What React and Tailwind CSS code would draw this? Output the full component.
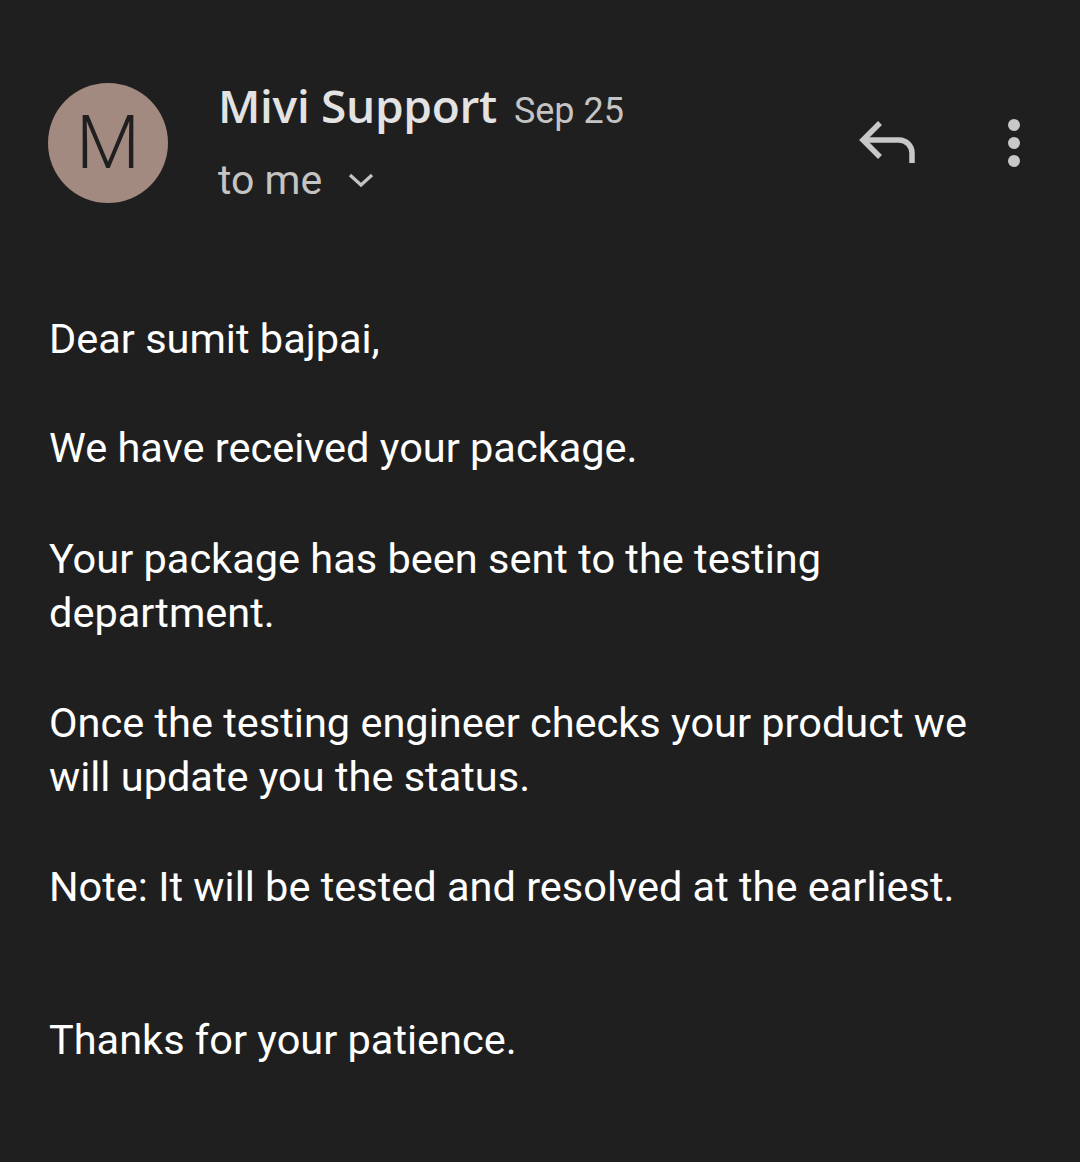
export default function App() {
  return (
    <div className="w-[1080px] h-[1162px] bg-[#1f1f1f] overflow-hidden relative" style={{ fontFamily: "Roboto, 'Liberation Sans', sans-serif" }}>
      <div className="flex items-start pt-[83px] pl-[48px]">
        <div className="w-[120px] h-[120px] rounded-full bg-[#a38a80] flex items-center justify-center shrink-0">
          <span className="text-[#1f1f1f] text-[74px] leading-none font-light" style={{ fontFamily: "Roboto, sans-serif" }}>M</span>
        </div>
        <div className="ml-[50px] flex flex-col">
          <div className="flex items-baseline mt-[-2px]">
            <span className="text-[#e3e3e3] text-[46px] font-semibold leading-[48px]" style={{ fontFamily: "'Open Sans', Roboto, sans-serif", letterSpacing: "-0.3px" }}>Mivi Support</span>
            <span className="text-[#c4c4c4] text-[36px] leading-[48px] ml-[17px]">Sep 25</span>
          </div>
          <div className="flex items-center mt-[23px]">
            <span className="text-[#c4c4c4] text-[41px] leading-[44px]">to me</span>
            <svg width="26" height="18" viewBox="0 0 26 18" className="ml-[26px]">
              <path d="M2 4 L13 14 L24 4" fill="none" stroke="#c4c4c4" strokeWidth="3.2" />
            </svg>
          </div>
        </div>
      </div>

      <svg width="64" height="48" viewBox="0 0 64 48" className="absolute left-[856px] top-[118px]">
        <path d="M6 22 H43 a13 13 0 0 1 13 13 V45" fill="none" stroke="#c8c8c8" strokeWidth="5.5" />
        <path d="M24 5 L7 22 L24 39" fill="none" stroke="#c8c8c8" strokeWidth="5.5" />
      </svg>
      <svg width="16" height="52" viewBox="0 0 16 52" className="absolute left-[1006px] top-[117px]">
        <circle cx="8" cy="8" r="6" fill="#c8c8c8" />
        <circle cx="8" cy="26" r="6" fill="#c8c8c8" />
        <circle cx="8" cy="44" r="6" fill="#c8c8c8" />
      </svg>

      <div className="pl-[49px] pr-[40px] mt-[109px] text-white text-[41.5px] leading-[54.5px]">
        <p>Dear sumit bajpai,</p>
        <p className="mt-[54.5px]">We have received your package.</p>
        <p className="mt-[56px]">Your package has been sent to the testing<br />department.</p>
        <p className="mt-[55px]">Once the testing engineer checks your product we<br />will update you the status.</p>
        <p className="mt-[55px]">Note: It will be tested and resolved at the earliest.</p>
        <p className="mt-[99px]">Thanks for your patience.</p>
      </div>
    </div>
  );
}
